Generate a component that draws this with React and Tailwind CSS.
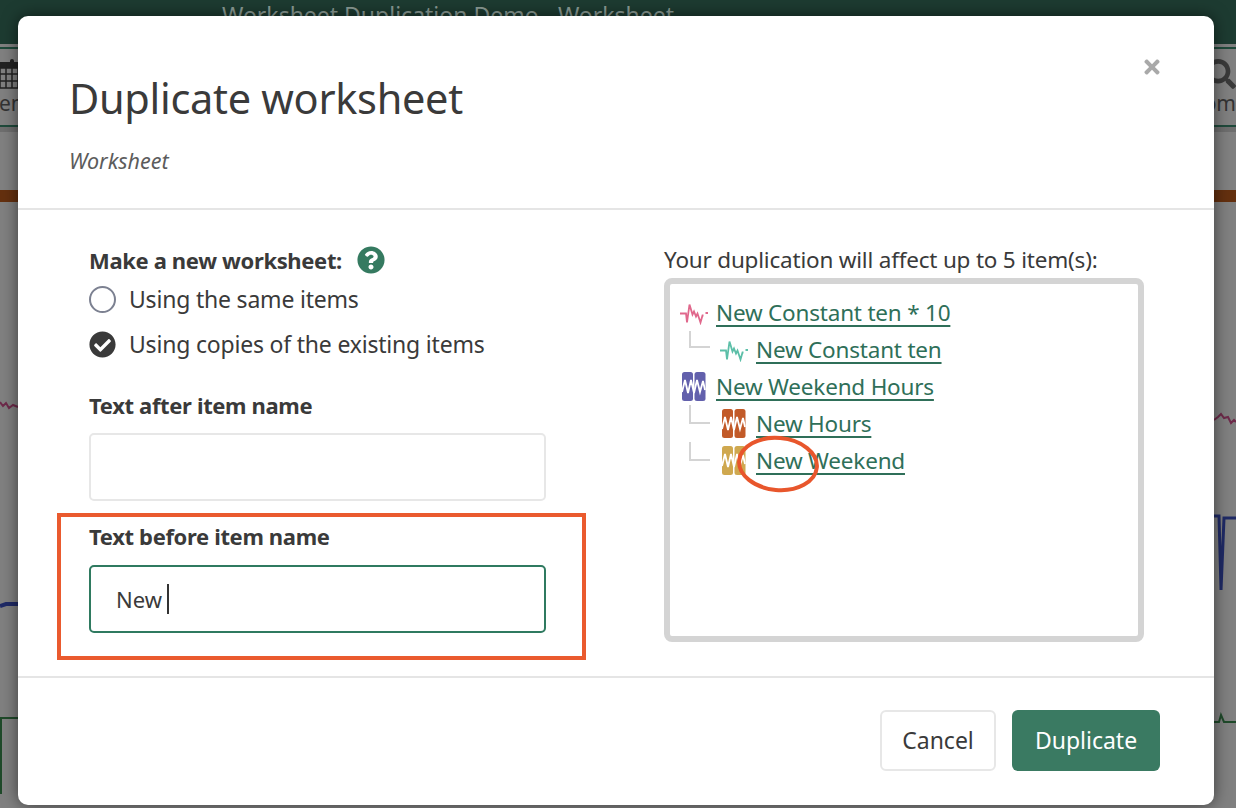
import { FaCheckCircle, FaQuestionCircle, FaTimes, FaSearch } from 'react-icons/fa';

const font = { fontFamily: '"Noto Sans", sans-serif' };

function SignalIcon({ color }) {
  return (
    <svg width="28" height="24" viewBox="0 0 28 24" fill="none" stroke={color} strokeWidth="1.8" className="shrink-0">
      <path d="M0 12.5h5M5 12.5l1 0 1 9 2.5-18 3 10 1.5-3 2 5 1.5-3 3 9 2-7h1M25.5 12h2.5" />
    </svg>
  );
}

function BlockIcon({ color }) {
  return (
    <svg width="24" height="29" viewBox="0 0 24 29" fill="none" className="shrink-0">
      <rect x="0" y="0" width="11" height="29" rx="2.5" fill={color} />
      <rect x="12.5" y="0" width="11" height="29" rx="2.5" fill={color} />
      <path d="M0 20l3-12 3 13 3-13 3 13 3-13 3 12 3-11 2 9" stroke="#fff" strokeWidth="1.8" />
    </svg>
  );
}

function Item({ kind, color, label, child, lineHeight }) {
  return (
    <div className="flex h-[37px] items-center">
      {child ? (
        <span
          className="ml-[9px] mr-[10px] w-[21px] shrink-0 self-start border-b-2 border-l-2 border-[#d4d4d4]"
          style={{ height: lineHeight }}
        />
      ) : null}
      <span className="flex w-[28px] shrink-0 justify-center">
        {kind === 'signal' ? <SignalIcon color={color} /> : <BlockIcon color={color} />}
      </span>
      <a className="ml-2 text-[22.5px] tracking-[-0.2px] text-[#2f6f59] underline underline-offset-[4px]">{label}</a>
      {child && kind === 'none' ? null : null}
    </div>
  );
}

function Background() {
  return (
    <div className="flex h-[808px] flex-col bg-[#808080]">
      <div className="h-[44px] shrink-0 bg-[#1d3b31] pl-[222px] text-[23px] leading-[30px] text-[#8b9b95]">
        Worksheet Duplication Demo - Worksheet
      </div>
      <div className="flex h-[88px] shrink-0 items-start justify-between border-b-[6px] border-[#6e6e6e] pt-[3px]">
        <div className="h-[80px] w-full border-y-2 border-[#1f4a3b] px-0 pt-[10px] text-[#333]">
          <div className="flex justify-between">
            <svg width="18" height="32" viewBox="0 0 18 32" fill="#222">
              <rect x="0" y="3" width="18" height="6" />
              <path d="M3 9h15v20H0V9zM0 15h18M0 22h18M6 9v20M12 9v20" fill="none" stroke="#222" strokeWidth="1.5" />
              <rect x="10" y="0" width="4" height="7" rx="2" />
            </svg>
            <FaSearch className="text-[30px] text-[#3a3a3a]" />
          </div>
          <div className="flex justify-between text-[21px] leading-[24px]">
            <span className="-ml-[1px]">en</span>
            <span>om</span>
          </div>
        </div>
      </div>
      <div className="min-h-0 flex-1">
        <svg viewBox="0 0 1236 676" className="h-full w-full" fill="none" strokeWidth="2">
          <rect x="0" y="58" width="1236" height="12" fill="#64300f" />
          <path d="M0 270l3 4 3-3 3 5 4-3 5 2" stroke="#6e2a4a" />
          <path d="M1214 288l4-3 3-3 3 4 4-1 3 6 3-3 2 2" stroke="#6e2a4a" />
          <path d="M0 474l6-2h12" stroke="#1f2a66" strokeWidth="4" />
          <path d="M1214 384h5l2 74 3-72h12" stroke="#1f2a66" strokeWidth="3" />
          <path d="M1 662V586h17" stroke="#1f4a2a" />
          <path d="M1214 590h5l2-7 3 7h12" stroke="#1f4a2a" />
        </svg>
      </div>
    </div>
  );
}

export default function App() {
  return (
    <div className="relative h-[808px] w-[1236px] overflow-hidden text-[#3a3a3a]" style={font}>
      <Background />

      <div className="absolute left-[18px] top-[16px] flex h-[789px] w-[1196px] flex-col rounded-[10px] bg-white shadow-[0_0_16px_rgba(0,0,0,0.55)]">
        <header className="relative h-[194px] shrink-0 border-b-2 border-[#e5e5e5] pl-[51px] pt-[50px]">
          <h1 className="text-[41.5px] font-normal leading-[64px] tracking-[-0.3px]">Duplicate worksheet</h1>
          <p className="mt-[15px] text-[21.5px] italic leading-[32px] text-[#5c5c5c]">Worksheet</p>
          <button className="absolute right-[51px] top-[40px] text-[#a9a9a9]">
            <FaTimes className="text-[22px]" />
          </button>
        </header>

        <div className="flex min-h-0 flex-1 border-b-2 border-[#e5e5e5]">
          <div className="w-[646px] shrink-0 pl-[71px] pt-[34px]">
            <div className="flex h-[32px] items-center gap-[15px] text-[22px] font-bold tracking-[-0.35px]">
              Make a new worksheet:
              <FaQuestionCircle className="text-[28px] text-[#357a60]" />
            </div>
            <div className="mt-[7px] flex h-[32px] items-center gap-[13px] text-[23px] tracking-[-0.2px]">
              <span className="h-[27px] w-[27px] rounded-full border-2 border-[#7c8191]" />
              Using the same items
            </div>
            <div className="mt-[13px] flex h-[32px] items-center gap-[13px] text-[23px] tracking-[-0.2px]">
              <FaCheckCircle className="text-[27px] text-[#3a3a3a]" />
              Using copies of the existing items
            </div>

            <label className="mt-[29px] block h-[32px] text-[22px] font-bold leading-[32px] tracking-[-0.35px]">Text after item name</label>
            <div className="mt-[12px] h-[68px] w-[457px] rounded-[5px] border-2 border-[#e7e7e7]" />

            <label className="mt-[19px] block h-[32px] text-[22px] font-bold leading-[32px] tracking-[-0.35px]">Text before item name</label>
            <div className="mt-[13px] flex h-[68px] w-[457px] items-center rounded-[5px] border-2 border-[#2f7a60] pl-[25px] text-[22px]">
              New<span className="ml-[5px] h-[30px] w-[2px] bg-[#333]" />
            </div>
          </div>

          <div className="flex-1 pt-[34px]">
            <div className="h-[32px] text-[22.5px] leading-[32px] tracking-[-0.2px]">Your duplication will affect up to 5 item(s):</div>
            <div className="mt-[2px] h-[364px] w-[480px] rounded-[8px] border-[6px] border-[#d4d4d4] pl-[10px] pt-[10px]">
              <Item kind="signal" color="#e0688c" label="New Constant ten * 10" />
              <Item kind="signal" color="#5cbfa8" label="New Constant ten" child lineHeight={17} />
              <Item kind="block" color="#6260ac" label="New Weekend Hours" />
              <Item kind="block" color="#c25a28" label="New Hours" child lineHeight={19} />
              <Item kind="block" color="#cfa84f" label="New Weekend" child lineHeight={19} />
            </div>
          </div>
        </div>

        <footer className="flex h-[127px] shrink-0 items-start justify-end gap-4 pr-[54px] pt-[32px]">
          <button className="h-[61px] w-[116px] rounded-[6px] border-2 border-[#e7e7e7] text-[23px]">Cancel</button>
          <button className="h-[61px] w-[148px] rounded-[6px] bg-[#3a7a62] text-[23px] text-white">Duplicate</button>
        </footer>
      </div>

      {/* annotations drawn on top of the dialog */}
      <div className="absolute left-[57px] top-[513px] h-[147px] w-[529px] border-[4px] border-[#ea5a2e]" />
      <svg className="absolute left-[730px] top-[430px]" width="96" height="68" fill="none">
        <ellipse cx="48" cy="34" rx="39" ry="26" stroke="#e8562c" strokeWidth="4" transform="rotate(5 48 34)" />
      </svg>
    </div>
  );
}
